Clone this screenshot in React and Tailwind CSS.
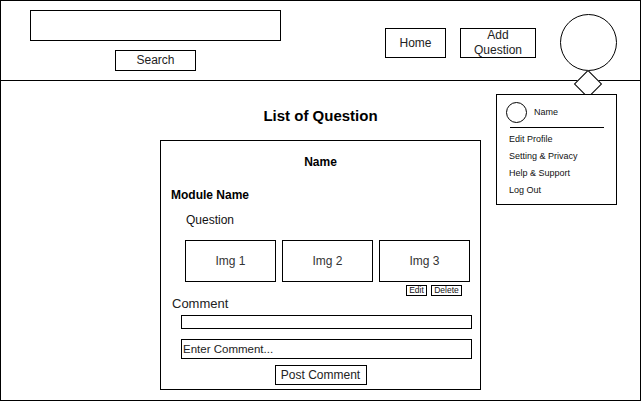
import React from "react";

const menuItems = ["Edit Profile", "Setting & Privacy", "Help & Support", "Log Out"];
const images = ["Img 1", "Img 2", "Img 3"];

export default function App() {
  return (
    <div className="relative w-[641px] h-[401px] border border-black bg-white text-[#111] font-['Liberation_Sans',Arial,sans-serif] overflow-hidden">
      {/* top bar */}
      <div className="h-[80px] border-b border-black flex items-start">
        <div className="ml-[29px] mt-[9px] flex flex-col items-center">
          <div className="w-[251px] h-[31px] border border-black" />
          <button className="mt-[9px] w-[81px] h-[21px] border border-black text-[12px] text-[#222] leading-none flex items-center justify-center pb-[1px]">
            Search
          </button>
        </div>
        <button className="ml-[104px] mt-[27px] w-[61px] h-[30px] border border-black text-[12px] text-[#222] flex items-center justify-center">
          Home
        </button>
        <button className="ml-[14px] mt-[27px] w-[76px] h-[30px] border border-black text-[12px] text-[#222] leading-[15px] flex flex-col items-center justify-center">
          <span>Add</span>
          <span>Question</span>
        </button>
        <div className="ml-[24px] mt-[13px] w-[57px] h-[57px] rounded-full border border-black" />
      </div>

      {/* main */}
      <div className="flex flex-col items-center">
        <h1 className="mt-[25px] text-[15px] leading-[20px] font-bold text-black">List of Question</h1>
        <div className="mt-[14px] w-[321px] h-[250px] border border-black flex flex-col">
          <div className="pt-[14px] text-center text-[12px] leading-[14px] font-bold text-black">Name</div>
          <div className="mt-[19px] pl-[10px] text-[12px] leading-[14px] font-bold text-black">Module Name</div>
          <div className="mt-[11px] pl-[25px] text-[12px] leading-[14px]">Question</div>
          <div className="mt-[13px] pl-[24px] flex gap-[6px]">
            {images.map((img) => (
              <div
                key={img}
                className="w-[91px] h-[42px] border border-black text-[12px] text-[#333] flex items-center justify-center"
              >
                {img}
              </div>
            ))}
          </div>
          <div className="mt-[3px] pl-[245px] flex gap-[4px] text-[8.5px] leading-none">
            <span className="w-[21px] h-[11px] border border-black flex items-center justify-center">Edit</span>
            <span className="w-[31px] h-[11px] border border-black flex items-center justify-center">Delete</span>
          </div>
          <div className="pl-[11px] text-[13px] leading-[15px] text-[#222]">Comment</div>
          <div className="mt-[4px] ml-[20px] w-[291px] h-[14px] border border-black" />
          <div className="mt-[10px] ml-[20px] w-[291px] h-[20px] border border-black pl-[1px] text-[11.5px] leading-[18px] text-[#222]">
            Enter Comment...
          </div>
          <button className="mt-[6px] mx-auto w-[92px] h-[20px] border border-black text-[12px] text-[#222] flex items-center justify-center">
            Post Comment
          </button>
        </div>
      </div>

      {/* profile dropdown */}
      <div className="absolute left-[577px] top-[73px] w-[20px] h-[20px] rotate-45 border border-black bg-white" />
      <div className="absolute left-[495px] top-[93px] w-[121px] h-[111px] border border-black bg-white flex flex-col">
        <div className="mt-[7px] ml-[9px] flex items-center">
          <div className="w-[21px] h-[21px] rounded-full border border-black" />
          <span className="ml-[7px] text-[9px]">Name</span>
        </div>
        <div className="mt-[4px] ml-[13px] w-[94px] border-t border-black" />
        <div className="mt-[3px] pl-[12px] flex flex-col text-[9px] leading-[17px]">
          {menuItems.map((item) => (
            <span key={item}>{item}</span>
          ))}
        </div>
      </div>
    </div>
  );
}
